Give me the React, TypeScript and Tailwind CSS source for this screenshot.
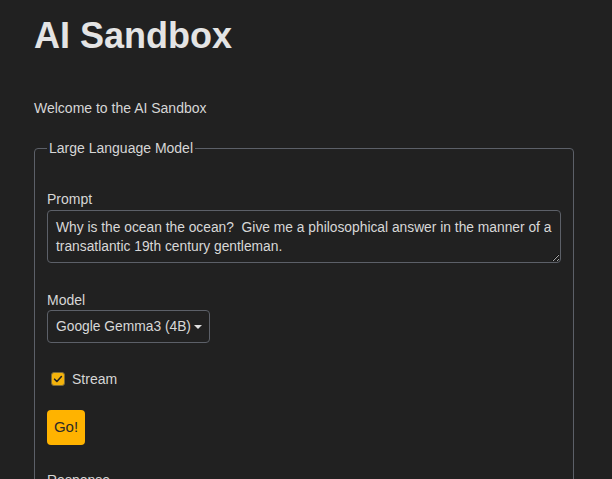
import React, { useState } from 'react';

const App: React.FC = () => {
  const [prompt, setPrompt] = useState(
    'Why is the ocean the ocean?  Give me a philosophical answer in the manner of a transatlantic 19th century gentleman.'
  );
  const [stream, setStream] = useState(true);

  return (
    <main className="min-h-screen bg-[#212121] pl-[34px] pr-[38px] pt-4 pb-10 font-['Liberation_Sans',Arial,sans-serif] text-[#d6d6d6]">
      <h1 className="text-[36px] font-bold leading-[40px] text-[#e4e4e4]">AI Sandbox</h1>
      <p className="mt-[42px] text-sm leading-5">Welcome to the AI Sandbox</p>

      <fieldset className="mt-5 w-[540px] rounded-[4px] border border-[#5c6068] px-3 pt-[31px] pb-4">
        <legend className="px-0.5 text-sm leading-5">Large Language Model</legend>

        <label className="mb-px block text-sm leading-5">Prompt</label>
        <textarea
          value={prompt}
          onChange={(e) => setPrompt(e.target.value)}
          className="block h-[53px] w-full rounded-[4px] border border-[#5c6068] bg-transparent pl-2 pr-1 pt-[7px] pb-[6px] text-[13.8px] leading-[19px] text-[#d8d8d8] outline-none"
        />

        <label className="mt-[27px] block text-sm leading-5">Model</label>
        <button className="flex h-[33px] w-[163px] items-center whitespace-nowrap rounded-[4px] border border-[#5c6068] bg-transparent pl-2 pr-[7px] text-left text-[13.8px] leading-5 text-[#d8d8d8]">
          Google Gemma3 (4B)
          <span className="ml-[3px] h-0 w-0 border-x-[4px] border-t-[4px] border-x-transparent border-t-[#e0e0e0]" />
        </button>

        <label className="mt-[26px] flex h-5 items-center text-sm leading-5" onClick={() => setStream(!stream)}>
          <span
            className={`ml-1 mr-[7px] flex h-[14px] w-[14px] items-center justify-center rounded-[3px] border ${
              stream ? 'border-[#7a6a3a] bg-[#f4b30c]' : 'border-[#6b6b6b] bg-transparent'
            }`}
          >
            {stream && (
              <svg width="10" height="10" viewBox="0 0 10 10" fill="none">
                <path d="M1.6 5.2l2.3 2.3 4.5-5" stroke="#222" strokeWidth="1.6" strokeLinecap="round" strokeLinejoin="round" />
              </svg>
            )}
          </span>
          Stream
        </label>

        <button className="mt-[21px] flex h-[35px] w-[38px] items-center justify-center rounded-[4px] bg-[#ffb300] text-[15px] text-[#2a2a2a]">
          Go!
        </button>

        <label className="mt-[25px] block text-sm leading-5">Response</label>
        <div className="mt-px h-[120px] w-full rounded-[4px] border border-[#5c6068]" />
      </fieldset>
    </main>
  );
};

export default App;
